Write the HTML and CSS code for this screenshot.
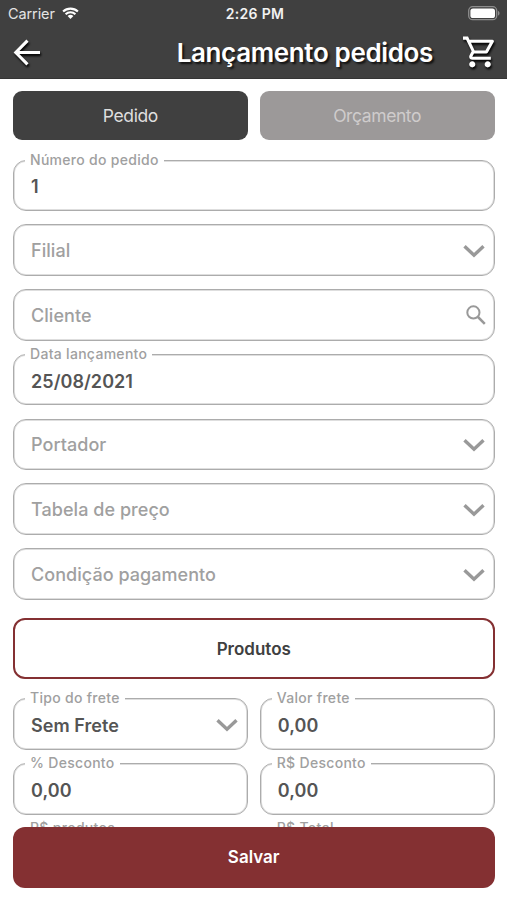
FILE: index.html
```html
<!DOCTYPE html>
<html lang="pt-BR">
<head>
<meta charset="utf-8">
<meta name="viewport" content="width=device-width, initial-scale=1">
<title>Lançamento pedidos</title>
<link rel="stylesheet" href="styles.css">
</head>
<body>
<svg class="defs" aria-hidden="true">
  <symbol id="chevron" viewBox="0 0 22 14"><path d="M1.500 2.200 11 11.200l9.500-9" fill="none" stroke="currentColor" stroke-width="3.400"/></symbol>
</svg>
<div class="screen">
  <header class="header">
    <div class="status">
      <div class="carrier"><span>Carrier</span>
        <svg class="wifi" viewBox="0 0 17 12"><path d="M1.1 4.6a10.6 10.6 0 0 1 14.8 0M3.6 7.2a7 7 0 0 1 9.8 0" fill="none" stroke="#fff" stroke-width="2.1"/><path d="M5.6 9.1a4.1 4.1 0 0 1 5.8 0L8.5 12z" fill="#fff"/></svg>
      </div>
      <div class="clock">2:26 PM</div>
      <svg class="battery" viewBox="0 0 32 15"><rect x=".7" y=".7" width="28" height="13" rx="4" fill="none" stroke="#8d8d8d" stroke-width="1.3"/><rect x="2.4" y="2.4" width="24.6" height="9.6" rx="2.6" fill="#fff"/><path d="M30 5v4.6c1-.4 1.5-1.2 1.5-2.3S31 5.400 30 5z" fill="#8d8d8d"/></svg>
    </div>
    <div class="navbar">
      <svg class="back" viewBox="0 0 28 28"><path d="M27 13.500H3M14.500 1.700 2.800 13.500l11.700 11.800" fill="none" stroke="#fff" stroke-width="3.100"/></svg>
      <h1 class="title">Lançamento pedidos</h1>
      <svg class="cart" viewBox="1 2 22 20"><path fill="#fff" d="M15.550 13c.750 0 1.410-.410 1.750-1.030l3.580-6.490A.996.996 0 0 0 20.010 4H5.210l-.940-2H1v2h2l3.600 7.590-1.350 2.440C4.520 15.370 5.480 17 7 17h12v-2H7l1.100-2h7.450zM6.160 6h12.150l-2.760 5H8.530L6.160 6zM7 18c-1.100 0-1.990.900-1.990 2S5.900 22 7 22s2-.900 2-2-.900-2-2-2zm10 0c-1.100 0-1.990.900-1.990 2s.890 2 1.990 2 2-.900 2-2-.900-2-2-2z"/></svg>
    </div>
  </header>
  <main class="form">
    <div class="pair tabs">
      <button class="tab active">Pedido</button>
      <button class="tab">Orçamento</button>
    </div>
    <div class="fields">
      <div class="field"><span class="label">Número do pedido</span><span class="value">1</span></div>
      <div class="field"><span class="placeholder">Filial</span><svg class="chevron"><use href="#chevron"/></svg></div>
      <div class="field"><span class="placeholder">Cliente</span><svg class="search" viewBox="0 0 20 20"><circle cx="7.400" cy="7.400" r="6.100" fill="none" stroke="currentColor" stroke-width="2"/><path d="m12 12 6.800 6.800" stroke="currentColor" stroke-width="2.500"/></svg></div>
      <div class="field"><span class="label">Data lançamento</span><span class="value">25/08/2021</span></div>
      <div class="field"><span class="placeholder">Portador</span><svg class="chevron"><use href="#chevron"/></svg></div>
      <div class="field"><span class="placeholder">Tabela de preço</span><svg class="chevron"><use href="#chevron"/></svg></div>
      <div class="field"><span class="placeholder">Condição pagamento</span><svg class="chevron"><use href="#chevron"/></svg></div>
    </div>
    <button class="products">Produtos</button>
    <div class="pair totals">
      <div class="field"><span class="label">Tipo do frete</span><span class="value">Sem Frete</span><svg class="chevron"><use href="#chevron"/></svg></div>
      <div class="field"><span class="label">Valor frete</span><span class="value">0,00</span></div>
      <div class="field"><span class="label">% Desconto</span><span class="value">0,00</span></div>
      <div class="field"><span class="label">R$ Desconto</span><span class="value">0,00</span></div>
      <div class="field"><span class="label">R$ produtos</span></div>
      <div class="field"><span class="label">R$ Total</span></div>
    </div>
  </main>
  <footer class="footer"><button class="save">Salvar</button></footer>
</div>
</body>
</html>
```
FILE: styles.css
```css
* { box-sizing: border-box; }
body {
  margin: 0;
  background: #fff;
  font-family: Inter, "Liberation Sans", sans-serif;
  color: #505050;
}
button { font: inherit; margin: 0; padding: 0; border: 0; }
svg { display: block; flex: none; }
.defs { position: absolute; width: 0; height: 0; }
.screen { height: 900px; display: flex; flex-direction: column; overflow: hidden; }

.header { flex: none; height: 79px; background: #404040; border-bottom: 1px solid #353535; color: #fff; }
.status {
  height: 27px;
  padding: 0 7px 0 8px;
  display: grid;
  grid-template-columns: 1fr auto 1fr;
  align-items: center;
  font-size: 14.500px;
}
.carrier { display: flex; align-items: center; gap: 7px; color: #e4e4e4; }
.carrier span { letter-spacing: -0.1px; }
.wifi { width: 17px; height: 12px; margin-top: -1px; }
.clock { padding-left: 2px; font-weight: 600; font-size: 14px; letter-spacing: 0.3px; color: #f2f2f2; }
.battery { width: 32px; height: 15px; justify-self: end; }
.navbar { height: 51px; padding: 0 10px 0 13px; display: flex; align-items: center; }
.back { width: 28px; height: 28px; filter: drop-shadow(1px 2px 1px #000); }
.title {
  margin: 0 30px 0 auto;
  font-size: 26px;
  line-height: 32px;
  letter-spacing: -0.36px;
  font-weight: 600;
  white-space: nowrap;
  text-shadow: 2px 2px 2px #111;
}
.cart { width: 34px; height: 34px; margin-top: -1px; filter: drop-shadow(1px 2px 1px #000); }

.form { flex: 1; min-height: 0; overflow: hidden; padding: 12px 12.500px 0 13px; }
.pair { display: grid; grid-template-columns: 1fr 1fr; column-gap: 12px; }
.tab { height: 49px; border-radius: 9px; background: #9c9999; color: #cfcccc; font-size: 17.500px; letter-spacing: -0.4px; }
.tab.active { background: #404040; color: #dedede; }
.fields { margin-top: 19.500px; display: grid; row-gap: 13.300px; }
.field {
  position: relative;
  height: 51.500px;
  padding: 0 9px 0 17px;
  border: 1px solid #acacac;
  box-shadow: inset 0 0 0 1px #dedede;
  border-radius: 13px;
  display: flex;
  align-items: center;
  justify-content: space-between;
  font-size: 18px;
  font-weight: 600;
}
.label {
  position: absolute;
  top: -10px;
  left: 11px;
  padding: 0 5px;
  background: #fff;
  color: #a0a0a0;
  font-size: 14px;
  line-height: 18px;
  font-weight: 500;
  letter-spacing: 0.3px;
  white-space: nowrap;
}
.value { padding-top: 3px; color: #555; letter-spacing: 0.05px; }
.placeholder { padding-top: 1px; color: #a0a0a0; font-weight: 550; letter-spacing: 0.05px; }
.chevron { width: 22px; height: 14px; margin-top: 2px; color: #999; }
.search { width: 20px; height: 20px; margin: 1px -1px 0 0; color: #999; }
.products {
  display: block;
  width: 100%;
  height: 61px;
  margin: 18.500px 0 19px;
  border: 2px solid #843032;
  border-radius: 12px;
  background: #fff;
  color: #404040;
  font-size: 17px;
  font-weight: 600;
}
.totals { row-gap: 13.300px; }
.footer { flex: none; height: 73px; padding: 0 12.500px 0 13px; }
.save {
  width: 100%;
  height: 61px;
  padding-bottom: 1px;
  border-radius: 12px;
  background: #843032;
  color: #fff;
  font-size: 17px;
  font-weight: 600;
}
```
